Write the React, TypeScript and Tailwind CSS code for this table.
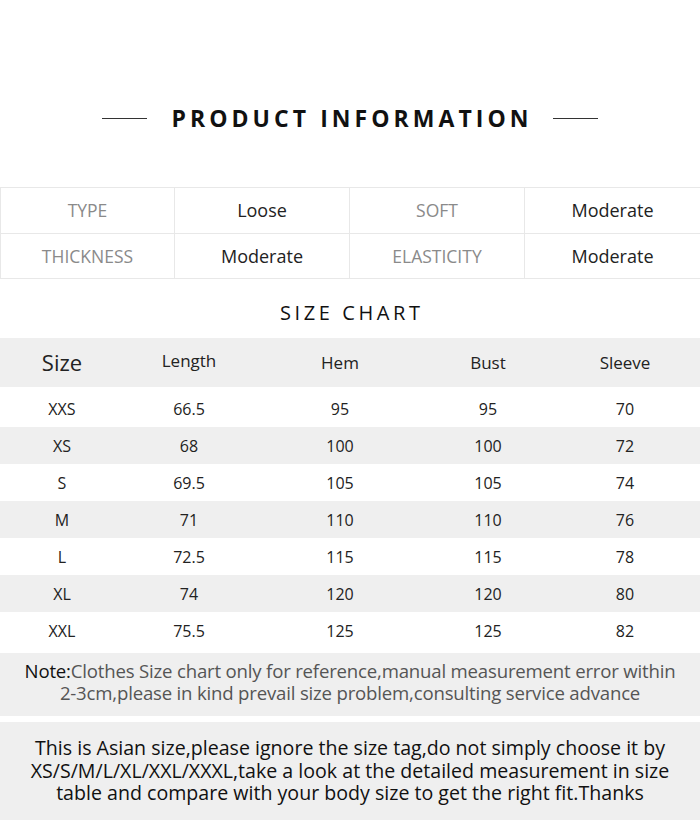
import React from "react";

const info = [
  ["TYPE", "Loose", "SOFT", "Moderate"],
  ["THICKNESS", "Moderate", "ELASTICITY", "Moderate"],
];

const sizes = [
  ["XXS", "66.5", "95", "95", "70"],
  ["XS", "68", "100", "100", "72"],
  ["S", "69.5", "105", "105", "74"],
  ["M", "71", "110", "110", "76"],
  ["L", "72.5", "115", "115", "78"],
  ["XL", "74", "120", "120", "80"],
  ["XXL", "75.5", "125", "125", "82"],
];

const cols = "grid grid-cols-[124px_130px_172px_124px_150px]";

export default function App() {
  return (
    <main className="w-[700px] h-[824px] bg-white overflow-hidden font-['Open_Sans',sans-serif] text-[#222]">
      {/* Title */}
      <div className="flex justify-center pt-[102px] h-[187px]">
        <div className="flex items-center gap-[24px] h-[32px]">
          <span className="w-[45px] h-px bg-[#333]" />
          <h1 className="text-[23px] font-bold tracking-[0.176em] leading-none text-[#111] mr-[-0.176em]">
            PRODUCT INFORMATION
          </h1>
          <span className="w-[45px] h-px bg-[#333]" />
        </div>
      </div>

      {/* Info table */}
      <div className="border-t border-[#e8e8e8]">
        {info.map((row, i) => (
          <div
            key={i}
            className={`grid grid-cols-4 border-b border-[#e8e8e8] ${i === 0 ? "h-[46px]" : "h-[45px]"}`}
          >
            {row.map((cell, j) => (
              <div
                key={j}
                className={`flex items-center justify-center border-r border-[#e8e8e8] last:border-r-0 first:border-l ${
                  j % 2 === 0 ? "text-[#8a8a8a] text-[17.5px]" : "text-[#222] text-[18px]"
                }`}
              >
                {cell}
              </div>
            ))}
          </div>
        ))}
      </div>

      {/* Size chart title */}
      <div className="h-[59px] flex items-center justify-center pt-[8px]">
        <h2 className="text-[20px] tracking-[0.18em] text-[#111] leading-none mr-[-0.18em]">SIZE CHART</h2>
      </div>

      {/* Size header */}
      <div className={`${cols} h-[49px] bg-[#efefef] items-center text-center`}>
        <div className="text-[22px]">Size</div>
        <div className="text-[17px] -mt-[4px]">Length</div>
        <div className="text-[17px]">Hem</div>
        <div className="text-[17px]">Bust</div>
        <div className="text-[17px]">Sleeve</div>
      </div>

      <div className="pt-[3px]">
        {sizes.map((row, i) => (
          <div
            key={i}
            className={`${cols} h-[37px] items-center text-center text-[16px] ${i % 2 === 1 ? "bg-[#efefef]" : "bg-white"}`}
          >
            {row.map((cell, j) => (
              <div key={j}>{cell}</div>
            ))}
          </div>
        ))}
      </div>

      {/* Note */}
      <div className="mt-[4px] h-[63px] bg-[#efefef] flex flex-col items-center justify-center text-center pb-[6px] text-[18.6px] leading-[22px] text-[#555] tracking-[-0.01em] whitespace-nowrap">
        <p className="h-[22px]">
          <span className="text-[#111]">Note:</span>Clothes Size chart only for reference,manual measurement error within
        </p>
        <p className="h-[22px]">2-3cm,please in kind prevail size problem,consulting service advance</p>
      </div>

      <div className="mt-[6px] h-[98px] bg-[#efefef] flex flex-col items-center justify-center text-center text-[19.6px] leading-[22.5px] text-[#111] whitespace-nowrap">
        <p className="h-[22.5px]">This is Asian size,please ignore the size tag,do not simply choose it by</p>
        <p className="h-[22.5px]">XS/S/M/L/XL/XXL/XXXL,take a look at the detailed measurement in size</p>
        <p className="h-[22.5px]">table and compare with your body size to get the right fit.Thanks</p>
      </div>
    </main>
  );
}
